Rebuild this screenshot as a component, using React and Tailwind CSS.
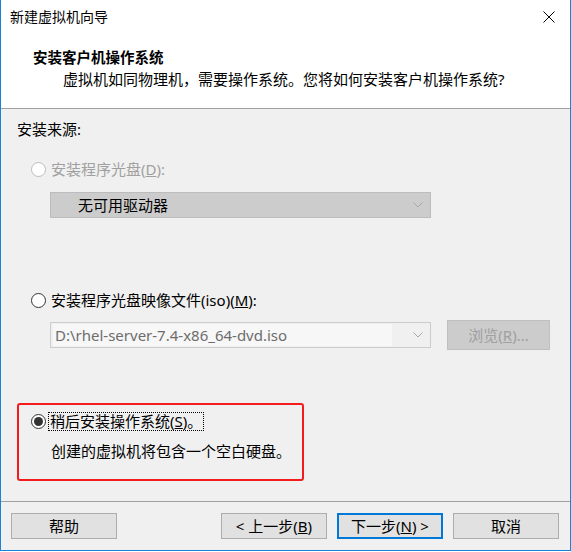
import React from "react";

const FONT = { fontFamily: '"Noto Sans", "Noto Sans CJK SC", sans-serif' };

function Radio({ checked, disabled }) {
  return (
    <span
      className={`inline-flex h-[15px] w-[15px] shrink-0 items-center justify-center rounded-full border bg-white ${
        disabled ? "border-[#bcbcbc]" : "border-[#333333]"
      }`}
    >
      {checked && <span className="h-[9px] w-[9px] rounded-full bg-[#333333]" />}
    </span>
  );
}

function Chevron() {
  return (
    <svg width="10" height="6" viewBox="0 0 10 6" className="shrink-0">
      <path d="M0.5 0.5 L5 5 L9.5 0.5" fill="none" stroke="#a8a8a8" strokeWidth="1" />
    </svg>
  );
}

function Btn({ children, primary }) {
  return (
    <div
      className={`flex h-[26px] w-[106px] items-center justify-center bg-[#e1e1e1] text-[15px] text-black ${
        primary ? "border-2 border-[#0078d7]" : "border border-[#adadad]"
      }`}
    >
      {children}
    </div>
  );
}

export default function App() {
  return (
    <div className="h-[552px] w-[571px] bg-white" style={FONT}>
      <div className="flex h-[551px] w-[571px] flex-col border-x border-b border-[#1883d7] bg-[#f0f0f0]">
        {/* header */}
        <div className="h-[109px] border-b border-[#a0a0a0] bg-white">
          <div className="flex h-[34px] items-center justify-between pl-[9px] pr-[15px]">
            <span className="text-[14px] leading-[20px] text-black">新建虚拟机向导</span>
            <svg width="12" height="12" viewBox="0 0 12 12">
              <path d="M0.5 0.5 L11.5 11.5 M11.5 0.5 L0.5 11.5" stroke="#000" strokeWidth="1" />
            </svg>
          </div>
          <div className="mt-[13px] pl-[32px] text-[14.5px] font-bold leading-[20px] text-black">
            安装客户机操作系统
          </div>
          <div className="mt-[2px] pl-[62px] text-[15px] leading-[20px] text-black">
            虚拟机如同物理机，需要操作系统。您将如何安装客户机操作系统?
          </div>
        </div>

        {/* body */}
        <div className="flex-1 pl-[16px]">
          <div className="mt-[10px] text-[15px] leading-[20px] text-black">安装来源:</div>

          <div className="mt-[20px] flex h-[20px] items-center gap-[5px] pl-[14px]">
            <Radio disabled />
            <span className="text-[15px] text-[#a0a0a0]">
              安装程序光盘(<span className="underline">D</span>):
            </span>
          </div>
          <div className="ml-[33px] mt-[13px] flex h-[26px] w-[381px] items-center justify-between border border-[#bcbcbc] bg-[#cccccc] pl-[27px] pr-[7px]">
            <span className="text-[15px] text-black">无可用驱动器</span>
            <Chevron />
          </div>

          <div className="mt-[72px] flex h-[20px] items-center gap-[5px] pl-[14px]">
            <Radio />
            <span className="text-[15px] text-black">
              安装程序光盘映像文件(iso)(<span className="underline">M</span>):
            </span>
          </div>
          <div className="mt-[10px] flex items-center">
            <div className="ml-[33px] flex h-[26px] w-[381px] items-center justify-between border border-[#cccccc] bg-[#f0f0f0] pl-[2px] pr-[7px]">
              <span className="flex h-[22px] w-[339px] items-center bg-[#f7f7f7] pl-[2px] text-[15px] text-[#6d6d6d]">
                D:\rhel-server-7.4-x86_64-dvd.iso
              </span>
              <Chevron />
            </div>
            <div className="ml-[16px] flex h-[30px] w-[103px] items-center justify-center border border-[#bfbfbf] bg-[#cccccc] text-[15px] text-[#a0a0a0]">
              浏览(<span className="underline">R</span>)...
            </div>
          </div>

          <div className="mt-[53px] w-[287px] rounded-[3px] border-2 border-[#f31b1b] pb-[18px] pt-[6px]">
            <div className="flex h-[20px] items-center gap-[2px] pl-[12px]">
              <Radio checked />
              <span className="border border-dotted border-black px-[1px] text-[15px] leading-[17px] text-black">
                稍后安装操作系统(<span className="underline">S</span>)。
              </span>
            </div>
            <div className="mt-[10px] pl-[32px] text-[15px] leading-[20px] text-black">
              创建的虚拟机将包含一个空白硬盘。
            </div>
          </div>
        </div>

        {/* footer */}
        <div className="h-[49px] border-t border-[#a0a0a0] pt-[11px]">
          <div className="flex items-center pl-[10px]">
            <Btn>帮助</Btn>
            <div className="ml-[104px]">
              <Btn>
                &lt; 上一步(<span className="underline">B</span>)
              </Btn>
            </div>
            <div className="ml-[10px]">
              <Btn primary>
                下一步(<span className="underline">N</span>) &gt;
              </Btn>
            </div>
            <div className="ml-[10px]">
              <Btn>取消</Btn>
            </div>
          </div>
        </div>
      </div>
    </div>
  );
}
